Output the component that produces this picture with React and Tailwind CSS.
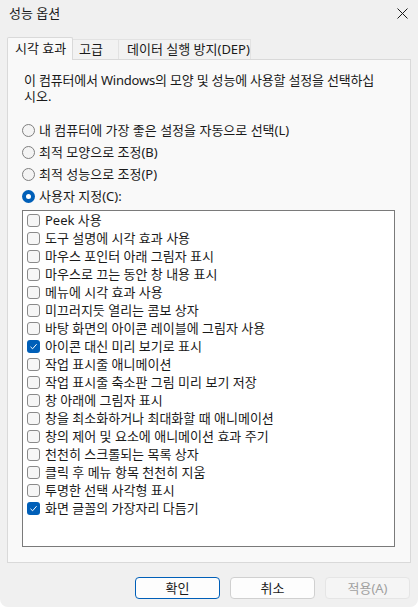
import React from 'react';

const effects = [
    { label: "Peek 사용", checked: false },
    { label: "도구 설명에 시각 효과 사용", checked: false },
    { label: "마우스 포인터 아래 그림자 표시", checked: false },
    { label: "마우스로 끄는 동안 창 내용 표시", checked: false },
    { label: "메뉴에 시각 효과 사용", checked: false },
    { label: "미끄러지듯 열리는 콤보 상자", checked: false },
    { label: "바탕 화면의 아이콘 레이블에 그림자 사용", checked: false },
    { label: "아이콘 대신 미리 보기로 표시", checked: true },
    { label: "작업 표시줄 애니메이션", checked: false },
    { label: "작업 표시줄 축소판 그림 미리 보기 저장", checked: false },
    { label: "창 아래에 그림자 표시", checked: false },
    { label: "창을 최소화하거나 최대화할 때 애니메이션", checked: false },
    { label: "창의 제어 및 요소에 애니메이션 효과 주기", checked: false },
    { label: "천천히 스크롤되는 목록 상자", checked: false },
    { label: "클릭 후 메뉴 항목 천천히 지움", checked: false },
    { label: "투명한 선택 사각형 표시", checked: false },
    { label: "화면 글꼴의 가장자리 다듬기", checked: true },
]

const radios = [
    { label: "내 컴퓨터에 가장 좋은 설정을 자동으로 선택(L)", checked: false },
    { label: "최적 모양으로 조정(B)", checked: false },
    { label: "최적 성능으로 조정(P)", checked: false },
    { label: "사용자 지정(C):", checked: true },
]

const Radio = ({ checked }) =>
    checked ? (
        <span className="w-[13px] h-[13px] rounded-full bg-[#005fb8] flex items-center justify-center shrink-0">
            <span className="w-[5px] h-[5px] rounded-full bg-white"></span>
        </span>
    ) : (
        <span className="w-[13px] h-[13px] rounded-full border border-[#7f7f7f] bg-[#f4f4f4] shrink-0"></span>
    )

const Checkbox = ({ checked }) =>
    checked ? (
        <span className="w-[13px] h-[13px] rounded-[3px] bg-[#005fb8] flex items-center justify-center shrink-0">
            <svg width="9" height="9" viewBox="0 0 9 9" fill="none">
                <path d="M1.5 4.8 L3.6 6.8 L7.6 2.2" stroke="white" strokeWidth="1" />
            </svg>
        </span>
    ) : (
        <span className="w-[13px] h-[13px] rounded-[3px] border border-[#8a8a8a] bg-[#f6f6f6] shrink-0"></span>
    )

const App = () => {
    return (
        <div className="w-[418px] h-[607px] bg-[#f0f0f0] flex flex-col text-[13px] text-[#1a1a1a] font-['Noto_Sans','Noto_Sans_CJK_KR',sans-serif] rounded-b-[8px]">
            {/* Title bar */}
            <div className="h-[26px] flex items-center justify-between pl-[9px] pr-[10px]">
                <span className="leading-[16px]">성능 옵션</span>
                <svg width="11" height="11" viewBox="0 0 11 11">
                    <path d="M0.5 0.5 L10.5 10.5 M10.5 0.5 L0.5 10.5" stroke="#1a1a1a" strokeWidth="1" />
                </svg>
            </div>

            {/* Tabs */}
            <div className="flex items-end px-[7px] pt-[11px]">
                <div className="w-[66px] h-[23px] pl-[7px] flex items-center bg-[#f9f9f9] border border-b-0 border-[#d9d9d9] rounded-t-[2px] -mb-px relative z-10">
                    시각 효과
                </div>
                <div className="w-[46px] h-[20px] pl-[6px] flex items-center bg-[#f2f2f2] border border-l-0 border-b-0 border-[#e2e2e2]">
                    고급
                </div>
                <div className="w-[132px] h-[20px] pl-[8px] flex items-center bg-[#f2f2f2] border border-l-0 border-b-0 border-[#e2e2e2] whitespace-nowrap">
                    데이터 실행 방지(DEP)
                </div>
            </div>

            {/* Panel */}
            <div className="mx-[7px] h-[504px] bg-[#f9f9f9] border border-[#d9d9d9] pl-[14px] pt-[12px]">
                <div className="ml-[2px] flex flex-col">
                    <div className="h-[16px] leading-[16px] whitespace-nowrap tracking-[-0.2px]">
                        이 컴퓨터에서 Windows의 모양 및 성능에 사용할 설정을 선택하십
                    </div>
                    <div className="h-[16px] leading-[16px]">시오.</div>
                </div>

                <div className="mt-[15px] flex flex-col">
                    {radios.map((r) => (
                        <div key={r.label} className="h-[22px] flex items-center gap-[4px]">
                            <Radio checked={r.checked} />
                            <span className="leading-[16px]">{r.label}</span>
                        </div>
                    ))}
                </div>

                {/* Effects list */}
                <div className="mt-[3px] w-[373px] h-[337px] bg-white border border-[#7a7a7a] pl-[4px] flex flex-col">
                    {effects.map((e) => (
                        <div key={e.label} className="h-[18px] flex items-center gap-[5px] shrink-0">
                            <Checkbox checked={e.checked} />
                            <span className="leading-[16px] whitespace-nowrap">{e.label}</span>
                        </div>
                    ))}
                </div>
            </div>

            {/* Buttons */}
            <div className="flex justify-end gap-[10px] pr-[8px] mt-[14px]">
                <button className="w-[85px] h-[22px] rounded-[4px] bg-[#fdfdfd] border border-[#005fb8] leading-[16px]">
                    확인
                </button>
                <button className="w-[85px] h-[22px] rounded-[4px] bg-[#fdfdfd] border border-[#d0d0d0] leading-[16px]">
                    취소
                </button>
                <button className="w-[85px] h-[22px] rounded-[4px] bg-[#f5f5f5] border border-[#e5e5e5] text-[#a0a0a0] leading-[16px]">
                    적용(A)
                </button>
            </div>
        </div>
    )
}

export default App
